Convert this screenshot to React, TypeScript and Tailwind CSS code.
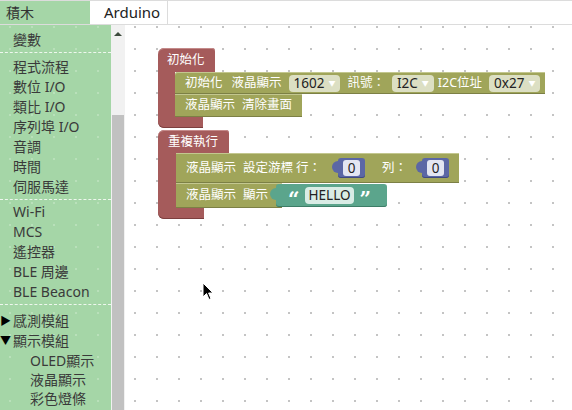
import React from "react";

const sections: string[][] = [
  ["變數"],
  ["程式流程", "數位 I/O", "類比 I/O", "序列埠 I/O", "音調", "時間", "伺服馬達"],
  ["Wi-Fi", "MCS", "遙控器", "BLE 周邊", "BLE Beacon"],
];

const shade = "shadow-[inset_0_1px_0_#c3c78f,inset_0_-1px_0_#7c8045]";

function Dropdown({ label }: { label: string }) {
  return (
    <span className="flex items-center h-[17px] rounded-[4px] bg-[#dcdfc3] pl-[5px] pr-[5px] gap-[4px] text-[#222] text-[13.5px]">
      <span className="leading-[17px]">{label}</span>
      <span className="text-[7px] text-white leading-none">▼</span>
    </span>
  );
}

function NumberBlock() {
  return (
    <div className="relative flex items-center h-[20px] bg-[#5b67a5] px-[5px] rounded-[3px] shadow-[inset_0_-1px_0_#3f4a80]">
      <div className="absolute -left-[6px] top-[3px] w-[7px] h-[12px] rounded-l-full bg-[#5b67a5]" />
      <span className="h-[16px] w-[17px] text-center bg-[#e3e6f2] rounded-[3px] text-[#222] text-[13.5px] leading-[16px]">0</span>
    </div>
  );
}

function GreenBlock({ h, children, className = "" }: { h: string; children: React.ReactNode; className?: string }) {
  return (
    <div className={`flex items-center ${h} bg-[#a0a55a] text-white pl-[10px] pr-[5px] gap-[7px] ${shade} ${className}`}>
      {children}
    </div>
  );
}

export default function App() {
  return (
    <div className="w-[572px] h-[410px] overflow-hidden flex flex-col bg-white font-['Noto_Sans','Noto_Sans_CJK_TC',sans-serif] text-[#333]">
      {/* tabs */}
      <div className="flex h-[25px] border-t border-b border-[#dcdcdc] shrink-0">
        <div className="w-[90px] bg-[#a5d6a7] pl-[6px] text-[14px] leading-[23px]">積木</div>
        <div className="ml-[7px] w-[71px] pl-[7px] border-r border-[#dcdcdc] text-[15px] leading-[23px] text-[#222]">Arduino</div>
      </div>

      <div className="flex flex-1 min-h-0">
        {/* toolbox */}
        <div className="w-[111px] bg-[#a5d6a7] bg-[radial-gradient(circle,#b9e0ba_1px,transparent_1.3px)] bg-[size:22px_22px] bg-[position:-1px_-9px] text-[14px] text-[#3a3a3a]">
          {sections.map((items, i) => (
            <div key={i} className={`${i === 0 ? "pt-[5px]" : i === 1 ? "pt-[4px]" : "pt-[2px]"} pb-[2px] border-b border-dashed border-[#eef7ee]`}>
              {items.map((t) => (
                <div key={t} className="h-[20px] leading-[20px] pl-[13px] whitespace-nowrap">{t}</div>
              ))}
            </div>
          ))}
          <div className="pt-[6px]">
            <div className="h-[20px] leading-[20px] flex items-center">
              <span className="w-[13px] text-[11px] text-black">▶</span>感測模組
            </div>
            <div className="h-[20px] leading-[20px] flex items-center">
              <span className="w-[13px] text-[11px] text-black">▼</span>顯示模組
            </div>
            {["OLED顯示", "液晶顯示", "彩色燈條"].map((t) => (
              <div key={t} className="h-[19px] leading-[19px] pl-[30px]">{t}</div>
            ))}
          </div>
        </div>

        {/* scrollbar */}
        <div className="w-[14px] bg-[#f1f1f1] flex flex-col">
          <div className="h-[90px] flex justify-center pt-[7px]">
            <div className="w-0 h-0 border-l-[4px] border-r-[4px] border-b-[4px] border-l-transparent border-r-transparent border-b-[#3d4a3d]" />
          </div>
          <div className="flex-1 bg-[#c1c1c1] mx-[1px]" />
        </div>

        {/* workspace */}
        <div className="relative flex-1 bg-white bg-[radial-gradient(circle,#c4c4c4_1px,transparent_1.3px)] bg-[size:22px_22px] bg-[position:-1px_-9px] text-[12.5px]">
          <div className="absolute left-[33px] top-[23px] flex flex-col">
            {/* setup */}
            <div className="flex flex-col">
              <div className="w-[57px] h-[24px] bg-[#a55b5b] rounded-tl-[6px] rounded-tr-[3px] pl-[9px] text-white leading-[24px] shadow-[inset_0_1px_0_#c48a8a]">初始化</div>
              <div className="flex">
                <div className="w-[17px] bg-[#a55b5b]" />
                <div className="flex flex-col items-start">
                  <GreenBlock h="h-[22px]" className="rounded-tl-[3px]">
                    <span>初始化</span>
                    <span className="ml-[2px]">液晶顯示</span>
                    <Dropdown label="1602" />
                    <span>訊號：</span>
                    <Dropdown label="I2C" />
                    <span className="-ml-[3px]">I2C位址</span>
                    <Dropdown label="0x27" />
                  </GreenBlock>
                  <GreenBlock h="h-[23px]" className="pr-[10px]">
                    <span>液晶顯示</span>
                    <span>清除畫面</span>
                  </GreenBlock>
                </div>
              </div>
              <div className="w-[45px] h-[11px] bg-[#a55b5b] rounded-bl-[6px] shadow-[inset_0_-1px_0_#7d3f3f]" />
            </div>

            {/* loop */}
            <div className="flex flex-col mt-[2px]">
              <div className="w-[71px] h-[23px] bg-[#a55b5b] rounded-tl-[6px] rounded-tr-[3px] pl-[10px] text-white leading-[23px] shadow-[inset_0_1px_0_#c48a8a]">重複執行</div>
              <div className="flex">
                <div className="w-[18px] bg-[#a55b5b]" />
                <div className="flex flex-col items-start">
                  <GreenBlock h="h-[30px]" className="pr-[10px]">
                    <span>液晶顯示</span>
                    <span>設定游標</span>
                    <span className="-ml-[4px]">行：</span>
                    <span className="ml-[10px]"><NumberBlock /></span>
                    <span className="ml-[10px]">列：</span>
                    <span className="ml-[8px]"><NumberBlock /></span>
                  </GreenBlock>
                  <div className="flex items-center">
                    <GreenBlock h="h-[25px]" className="pr-[14px]">
                      <span>液晶顯示</span>
                      <span>顯示</span>
                    </GreenBlock>
                    <div className="relative -ml-[6px] flex items-center h-[23px] bg-[#5ba58c] pl-[12px] pr-[16px] gap-[5px] rounded-[3px] text-white shadow-[inset_0_-1px_0_#3d7d67]">
                      <div className="absolute -left-[6px] top-[4px] w-[7px] h-[12px] rounded-l-full bg-[#5ba58c]" />
                      <span className="font-bold text-[20px] leading-none mt-[6px] font-['DejaVu_Serif',serif]">“</span>
                      <span className="h-[17px] px-[4px] bg-[#d9ece5] rounded-[4px] text-[#222] text-[13.5px] leading-[17px]">HELLO</span>
                      <span className="font-bold text-[20px] leading-none mt-[6px] font-['DejaVu_Serif',serif]">”</span>
                    </div>
                  </div>
                </div>
              </div>
              <div className="w-[46px] h-[11px] bg-[#a55b5b] rounded-bl-[6px] shadow-[inset_0_-1px_0_#7d3f3f]" />
            </div>
          </div>

          {/* mouse pointer */}
          <svg className="absolute left-[77px] top-[257px]" width="13" height="20" viewBox="0 0 13 20">
            <path d="M1 1 L1 15 L4.5 11.5 L7 17.5 L9 16.6 L6.6 11 L11 11 Z" fill="#000" stroke="#fff" strokeWidth="1" />
          </svg>
        </div>
      </div>
    </div>
  );
}
